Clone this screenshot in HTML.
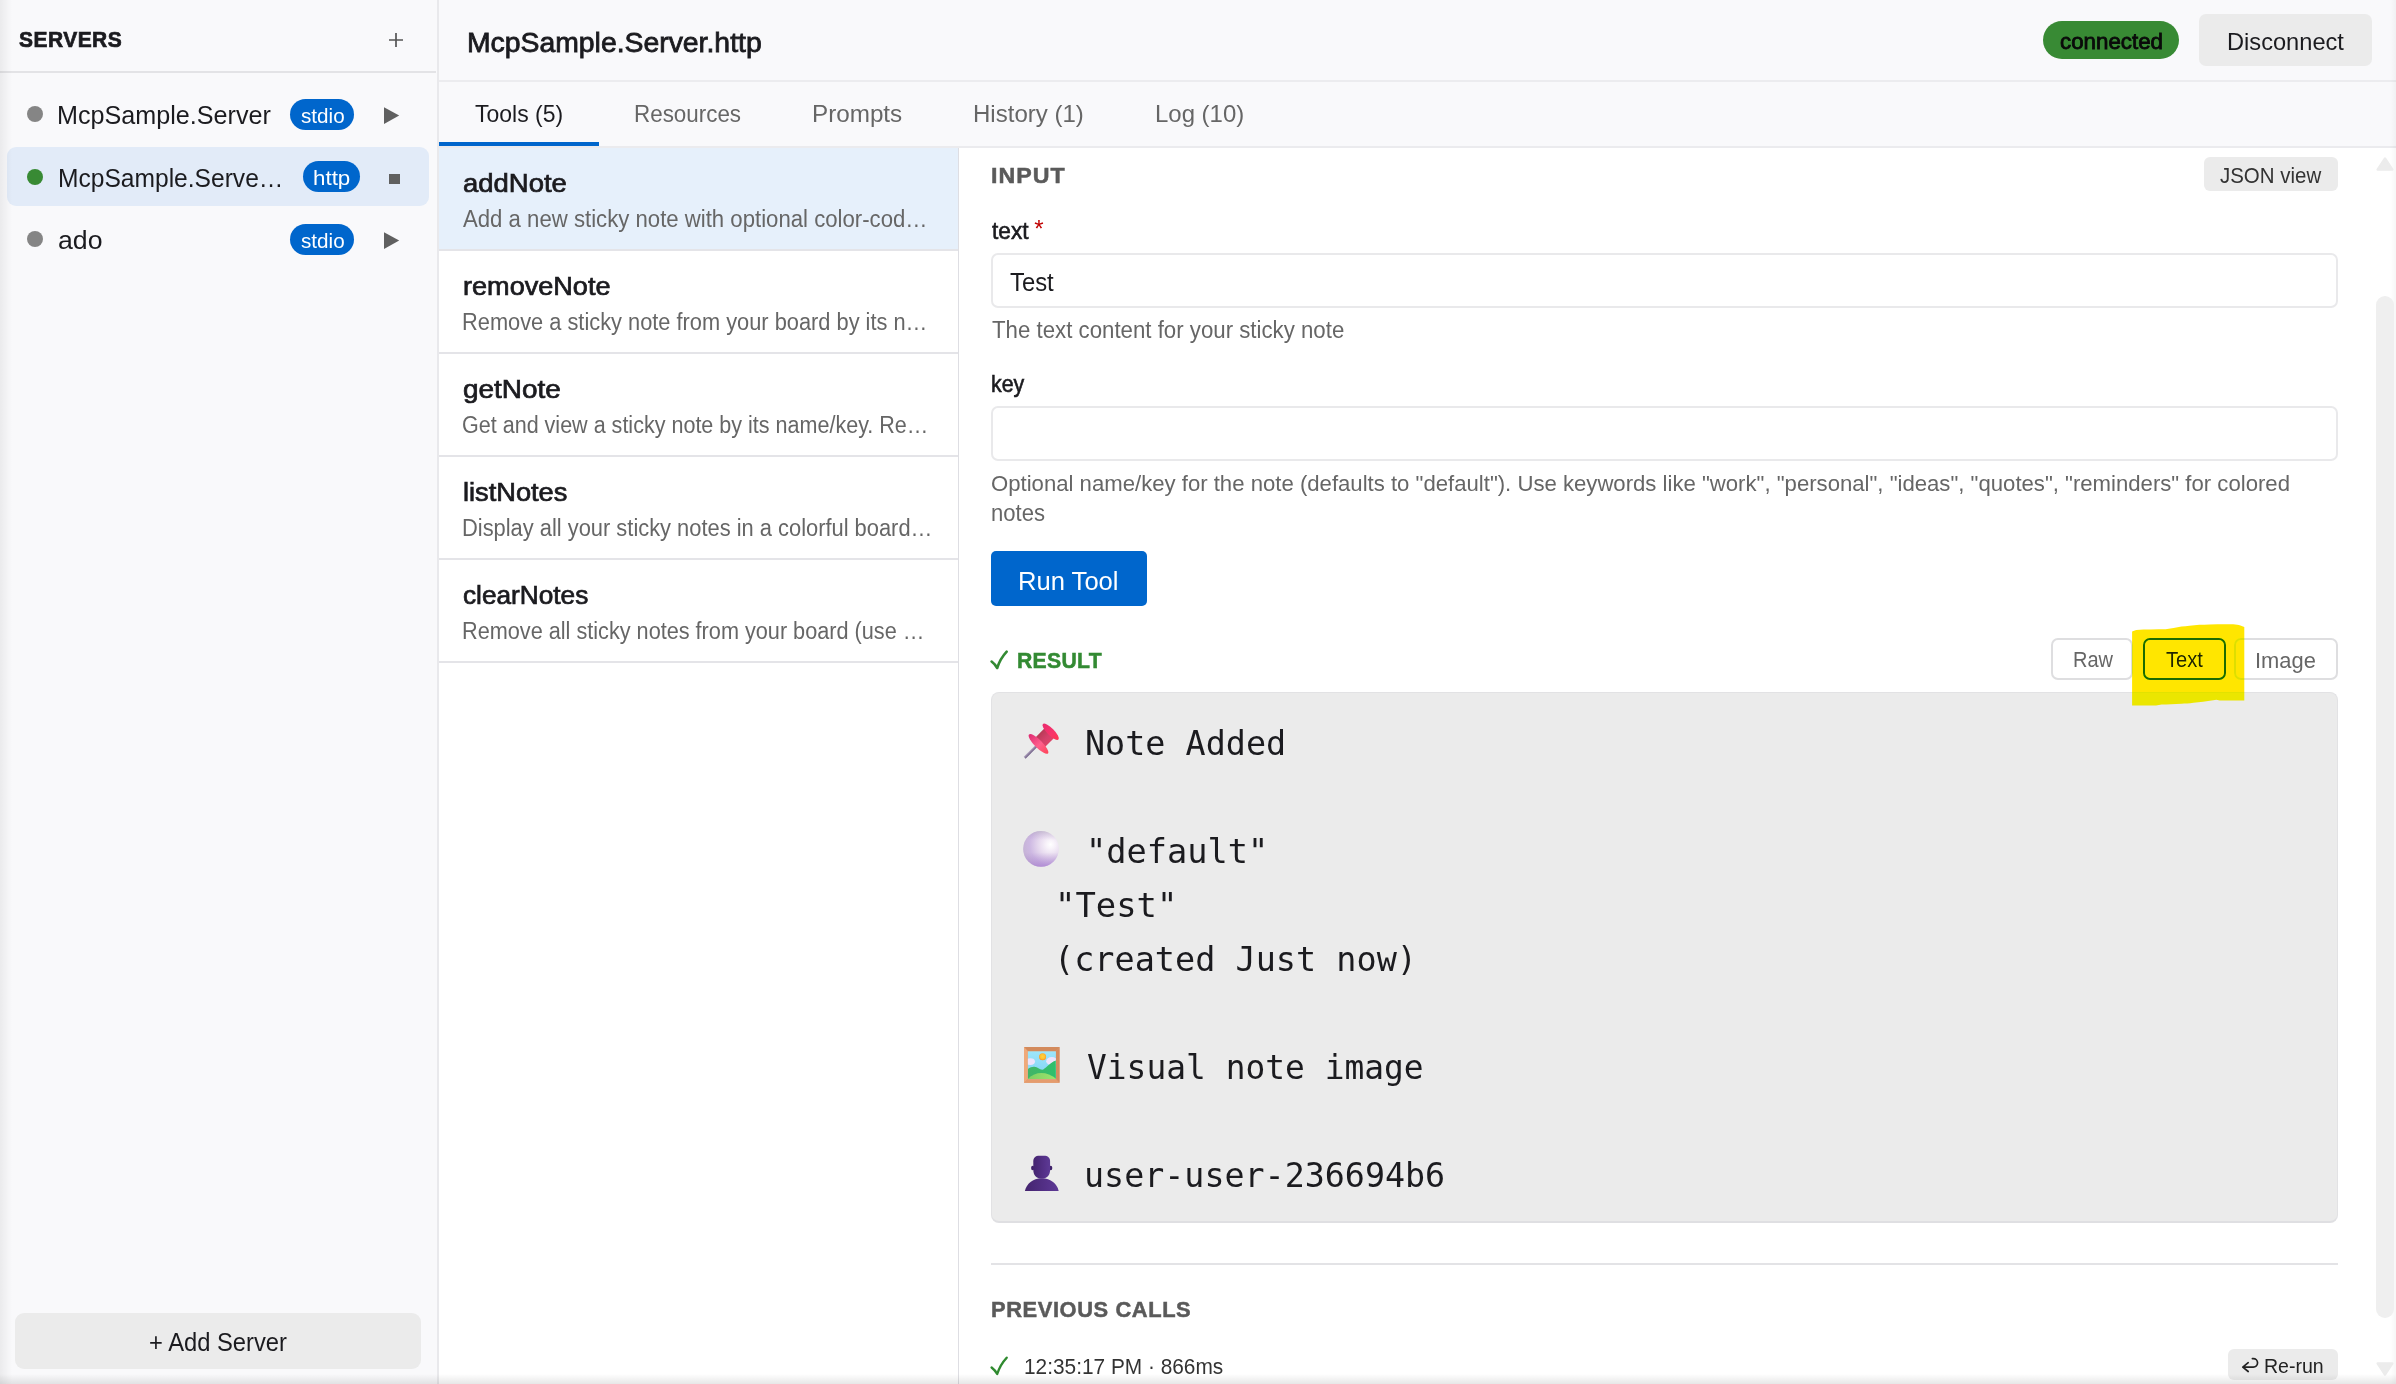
<!DOCTYPE html>
<html lang="en">
<head>
<meta charset="utf-8">
<title>MCP Inspector - McpSample.Server.http</title>
<style>
  html, body { margin: 0; padding: 0; }
  body { width: 2396px; height: 1384px; overflow: hidden; background: #fff;
         font-family: "Liberation Sans", sans-serif; color: #1b1b1f; }
  #app { position: relative; width: 2396px; height: 1384px; overflow: hidden; background: #fff; }
  .abs { position: absolute; box-sizing: border-box; }
  .t { position: absolute; white-space: pre; line-height: 1; transform-origin: 0 0; }
  /* regions */
  #sidebar { left: 0; top: 0; width: 439px; height: 1384px; background: #f9f9fb; border-right: 2px solid #e9e9ec; }
  #side-head { left: 0; top: 0; width: 436px; height: 73px; border-bottom: 2px solid #e3e3e6; }
  #header { left: 439px; top: 0; width: 1957px; height: 82px; background: #f9f9fb; border-bottom: 2px solid #ececef; }
  #tabs { left: 439px; top: 82px; width: 1957px; height: 66px; background: #f9f9fb; border-bottom: 2px solid #ebebee; }
  #tab-active { left: 439px; top: 142px; width: 160px; height: 4px; background: #0066cc; }
  #toollist { left: 439px; top: 148px; width: 520.5px; height: 1236px; background: #fff; border-right: 2px solid #dedee3; }
  .tool { left: 439px; width: 518.5px; height: 103px; border-bottom: 2px solid #e4e4e8; }
  .tool.sel { background: #e6f0fb; }
  #detail { left: 959px; top: 148px; width: 1437px; height: 1236px; background: #fff; }
  .srv-sel { left: 7px; top: 147px; width: 422px; height: 59px; border-radius: 9px; background: #e2ebf8; }
  .dot { width: 16px; height: 16px; border-radius: 50%; background: #858585; }
  .dot.on { background: #388a34; }
  .badge { background: #0066cc; border-radius: 16px; height: 31px; }
  .btn { background: #ebebeb; border-radius: 7px; }
  .input { left: 991px; width: 1347px; height: 55px; border: 2px solid #e9e9eb; border-radius: 7px; background: #fff; }
  .seg { top: 638px; height: 42px; border: 2px solid #dedee0; border-radius: 7px; background: #fff; }
  #result { left: 991px; top: 692px; width: 1347px; height: 531px; background: #ebebeb; border-radius: 8px;
            border: 1px solid #e2e2e4; border-bottom: 2px solid #dfdfe2; }
</style>
</head>
<body>
<div id="app">

  <!-- ============ SIDEBAR ============ -->
  <div id="sidebar" class="abs"></div>
  <div id="side-head" class="abs"></div>
  <svg class="abs" style="left:386px;top:30px" width="20" height="20" viewBox="0 0 20 20"><path d="M3 10H17M10 3V17" stroke="#555" stroke-width="1.7" fill="none"/></svg>

  <div class="abs srv-sel"></div>
  <div class="abs dot" style="left:27px;top:106px"></div>
  <div class="abs dot on" style="left:27px;top:169px"></div>
  <div class="abs dot" style="left:27px;top:231px"></div>

  <div class="abs badge" style="left:290px;top:99px;width:64px"></div>
  <div class="abs badge" style="left:303px;top:161px;width:57px"></div>
  <div class="abs badge" style="left:290px;top:224px;width:64px"></div>

  <svg class="abs" style="left:383px;top:106px" width="18" height="20" viewBox="0 0 18 20"><path d="M1 1.2L16.2 9.6L1 18z" fill="#606060"/></svg>
  <div class="abs" style="left:389px;top:174px;width:11px;height:10px;background:#606060"></div>
  <svg class="abs" style="left:383px;top:231px" width="18" height="20" viewBox="0 0 18 20"><path d="M1 1.2L16.2 9.6L1 18z" fill="#606060"/></svg>

  <div class="abs btn" style="left:15px;top:1313px;width:406px;height:56px;border-radius:9px"></div>

  <!-- ============ HEADER ============ -->
  <div id="header" class="abs"></div>
  <div class="abs" style="left:2043px;top:21px;width:136px;height:38px;border-radius:19px;background:#388a34"></div>
  <div class="abs btn" style="left:2199px;top:14px;width:173px;height:52px"></div>

  <!-- ============ TABS ============ -->
  <div id="tabs" class="abs"></div>
  <div id="tab-active" class="abs"></div>

  <!-- ============ TOOL LIST ============ -->
  <div id="toollist" class="abs"></div>
  <div class="abs tool sel" style="top:148px"></div>
  <div class="abs tool" style="top:251px"></div>
  <div class="abs tool" style="top:354px"></div>
  <div class="abs tool" style="top:457px"></div>
  <div class="abs tool" style="top:560px"></div>

  <!-- ============ DETAIL ============ -->
  <div id="detail" class="abs"></div>
  <div class="abs btn" style="left:2204px;top:157px;width:134px;height:34px;border-radius:6px"></div>
  <div class="abs input" style="top:253px"></div>
  <div class="abs input" style="top:406px"></div>
  <div class="abs" style="left:991px;top:551px;width:156px;height:55px;border-radius:5px;background:#0066cc"></div>

  <!-- result header -->
  <svg class="abs" style="left:988px;top:648px" width="24" height="24" viewBox="0 0 24 24"><path d="M3.600 13.500C5.600 15 7.600 17.200 9.200 20C11.200 13.800 14.300 8.400 18.700 3.700" stroke="#338a33" stroke-width="2.600" fill="none" stroke-linecap="round" stroke-linejoin="round"/></svg>
  <div class="abs seg" style="left:2051px;width:82px"></div>
  <div class="abs seg" style="left:2234px;width:104px"></div>
  <div class="abs seg" style="left:2143px;width:83px;border:2px solid #1b6b1b"></div>

  <!-- result box -->
  <div id="result" class="abs"></div>

  <!-- emoji icons drawn as SVG -->
  <!-- pushpin -->
  <svg class="abs" style="left:1011px;top:711px" width="60" height="60" viewBox="0 0 60 60">
    <defs>
      <linearGradient id="pinBase" x1="0" y1="0" x2="1" y2="0"><stop offset="0" stop-color="#df2a72"/><stop offset="0.55" stop-color="#ff5f8c"/><stop offset="1" stop-color="#ff4458"/></linearGradient>
      <linearGradient id="pinHead" x1="0" y1="0" x2="1" y2="0"><stop offset="0" stop-color="#ea2a6e"/><stop offset="0.6" stop-color="#f7356a"/><stop offset="1" stop-color="#ff3550"/></linearGradient>
      <linearGradient id="pinNeck" x1="0" y1="0" x2="1" y2="0"><stop offset="0" stop-color="#b83a56"/><stop offset="0.6" stop-color="#d4406a"/><stop offset="1" stop-color="#dc4468"/></linearGradient>
      <linearGradient id="ndl" x1="0" y1="0" x2="1" y2="0"><stop offset="0" stop-color="#b3a6c0"/><stop offset="1" stop-color="#6c5c84"/></linearGradient>
    </defs>
    <g transform="translate(27.5 32.9) rotate(45)">
      <rect x="-1.300" y="2" width="2.600" height="17.600" fill="url(#ndl)"/>
      <rect x="-6.75" y="-17" width="13.5" height="17" fill="url(#pinNeck)"/>
      <ellipse cx="0" cy="0" rx="13.400" ry="3.900" fill="url(#pinBase)"/>
      <ellipse cx="0" cy="-17.200" rx="11" ry="3.500" fill="url(#pinHead)"/>
    </g>
  </svg>
  <!-- white/lilac sphere -->
  <svg class="abs" style="left:1011px;top:819px" width="60" height="60" viewBox="0 0 60 60">
    <defs>
      <radialGradient id="sph" gradientUnits="userSpaceOnUse" cx="39.5" cy="25.5" r="30"><stop offset="0" stop-color="#ffffff"/><stop offset="0.14" stop-color="#f8f3fa"/><stop offset="0.4" stop-color="#e6d9ee"/><stop offset="0.7" stop-color="#cdb8e2"/><stop offset="1" stop-color="#c3b2d2"/></radialGradient>
      <linearGradient id="sphB" x1="0" y1="0" x2="0" y2="1"><stop offset="0" stop-color="#a0a0a8" stop-opacity="0.35"/><stop offset="0.25" stop-color="#b090d0" stop-opacity="0"/><stop offset="0.6" stop-color="#b090d0" stop-opacity="0"/><stop offset="1" stop-color="#a67bd0" stop-opacity="0.7"/></linearGradient>
    </defs>
    <circle cx="30" cy="29.9" r="17.9" fill="url(#sph)"/>
    <circle cx="30" cy="29.9" r="17.9" fill="url(#sphB)"/>
  </svg>
  <!-- framed picture -->
  <svg class="abs" style="left:1024px;top:1047px" width="36" height="36" viewBox="0 0 36 36">
    <defs>
      <linearGradient id="sky" x1="0" y1="0" x2="0" y2="1"><stop offset="0" stop-color="#9de6fb"/><stop offset="1" stop-color="#7fd0f3"/></linearGradient>
      <radialGradient id="sun" cx="0.5" cy="0.45" r="0.55"><stop offset="0" stop-color="#ffd23f"/><stop offset="0.65" stop-color="#ffc02e"/><stop offset="1" stop-color="#ff8a1e"/></radialGradient>
      <linearGradient id="mtn" x1="0" y1="0" x2="1" y2="0"><stop offset="0" stop-color="#43b466"/><stop offset="1" stop-color="#2fc06c"/></linearGradient>
      <linearGradient id="fld" x1="0" y1="0" x2="1" y2="0"><stop offset="0" stop-color="#7fcf63"/><stop offset="1" stop-color="#9be36d"/></linearGradient>
      <clipPath id="pic"><rect x="3.9" y="4.300" width="28" height="27.800"/></clipPath>
    </defs>
    <rect x="0" y="0" width="35.5" height="35.800" fill="#e29a6b"/>
    <path d="M0 0H35.5L31.900 4.300H3.900z" fill="#d38a5c"/>
    <path d="M35.5 0V35.800L31.900 32.100V4.300z" fill="#d48c60"/>
    <path d="M0 0V35.800L3.900 32.100V4.300z" fill="#efa979"/>
    <path d="M0 35.800H35.5L31.900 32.100H3.900z" fill="#e59c6e"/>
    <rect x="3.9" y="4.300" width="28" height="27.800" fill="url(#sky)"/>
    <g clip-path="url(#pic)">
      <ellipse cx="6.300" cy="14.600" rx="4.700" ry="3.400" fill="#eee3fb"/>
      <ellipse cx="27.800" cy="14.200" rx="5.600" ry="4.100" fill="#eee3fb"/>
      <circle cx="18.600" cy="9.800" r="3.500" fill="url(#sun)"/>
      <path d="M3.900 22.100C6 20.300 8.500 19.600 10.400 19.800C13.500 20 15.500 22.600 18.200 22.800C21 22.500 25 16 31.900 13.500V32.100H3.900z" fill="url(#mtn)"/>
      <path d="M3.900 31.700C8 27.800 12.500 26 17.300 26C22.500 26 27.500 28 31.900 31.500V32.100H3.900z" fill="url(#fld)"/>
    </g>
  </svg>
  <!-- bust in silhouette -->
  <svg class="abs" style="left:1011px;top:1143px" width="60" height="60" viewBox="0 0 60 60">
    <defs>
      <linearGradient id="bst" x1="0" y1="0" x2="1" y2="0"><stop offset="0" stop-color="#44246f"/><stop offset="0.65" stop-color="#553189"/><stop offset="1" stop-color="#5d3a95"/></linearGradient>
    </defs>
    <ellipse cx="21.700" cy="25" rx="1.600" ry="2.200" fill="#3e2168"/>
    <ellipse cx="39.700" cy="25" rx="1.600" ry="2.200" fill="#3e2168"/>
    <path d="M22.300 18.500C22.300 14.600 24.500 12.800 28.500 12.800H32.900C36.900 12.800 39.100 14.600 39.100 18.500V27C39.100 32 36 35.600 30.700 35.600C25.400 35.600 22.300 32 22.300 27z" fill="url(#bst)"/>
    <path d="M13.900 47.900C15.600 41 21.600 35.300 30.800 35.300C40 35.300 46 41 47.700 47.900z" fill="url(#bst)"/>
  </svg>

  <!-- separator + previous calls -->
  <div class="abs" style="left:991px;top:1263px;width:1347px;height:2px;background:#e3e3e6"></div>
  <svg class="abs" style="left:988px;top:1354px" width="24" height="24" viewBox="0 0 24 24"><path d="M3.600 13.500C5.600 15 7.600 17.200 9.200 20C11.200 13.800 14.300 8.400 18.700 3.700" stroke="#2f8a2f" stroke-width="2.400" fill="none" stroke-linecap="round" stroke-linejoin="round"/></svg>
  <div class="abs btn" style="left:2228px;top:1349px;width:110px;height:31px;border-radius:6px"></div>
  <svg class="abs" style="left:2240px;top:1355px" width="20" height="20" viewBox="0 0 20 20"><path d="M12.400 3.600H13.300A4.250 4.250 0 0 1 13.300 12.100H3M8.200 7.700L2.800 12.100L8.200 16.500" stroke="#222" stroke-width="1.700" fill="none" stroke-linecap="round" stroke-linejoin="round"/></svg>

  <!-- scrollbar -->
  <div class="abs" style="left:2390px;top:0;width:6px;height:1384px;background:linear-gradient(to right, rgba(0,0,0,0), rgba(0,0,0,0.035))"></div>
  <svg class="abs" style="left:2375px;top:156px" width="20" height="16" viewBox="0 0 20 16"><path d="M10 2.400L17.400 13.600H2.600z" fill="#ececec" stroke="#ececec" stroke-width="2.400" stroke-linejoin="round"/></svg>
  <div class="abs" style="left:2376px;top:296px;width:18px;height:1022px;border-radius:9px;background:#efefef"></div>
  <svg class="abs" style="left:2375px;top:1361px" width="20" height="16" viewBox="0 0 20 16"><path d="M10 13.600L17.400 2.400H2.600z" fill="#ececec" stroke="#ececec" stroke-width="2.400" stroke-linejoin="round"/></svg>

  <!-- ============ TEXT ============ -->
<span class="t" style='left:19.35px;top:28.68px;font-size:22px;font-weight:700;color:#1b1b1f;font-family:"Liberation Sans", sans-serif;letter-spacing:0.500px;transform:scaleX(0.9531);-webkit-text-stroke:0.7px currentColor;'>SERVERS</span>
<span class="t" style='left:57.49px;top:103.24px;font-size:25px;font-weight:400;color:#1b1b1f;font-family:"Liberation Sans", sans-serif;transform:scaleX(1.0060);'>McpSample.Server</span>
<span class="t" style='left:300.75px;top:105.12px;font-size:21px;font-weight:400;color:#fff;font-family:"Liberation Sans", sans-serif;transform:scaleX(0.9845);'>stdio</span>
<span class="t" style='left:57.53px;top:165.74px;font-size:25px;font-weight:400;color:#1b1b1f;font-family:"Liberation Sans", sans-serif;transform:scaleX(0.9833);'>McpSample.Serve…</span>
<span class="t" style='left:312.69px;top:167.12px;font-size:21px;font-weight:400;color:#fff;font-family:"Liberation Sans", sans-serif;transform:scaleX(1.0645);'>http</span>
<span class="t" style='left:58.43px;top:227.99px;font-size:25px;font-weight:400;color:#1b1b1f;font-family:"Liberation Sans", sans-serif;transform:scaleX(1.0676);'>ado</span>
<span class="t" style='left:300.75px;top:230.12px;font-size:21px;font-weight:400;color:#fff;font-family:"Liberation Sans", sans-serif;transform:scaleX(0.9845);'>stdio</span>
<span class="t" style='left:149.05px;top:1330.24px;font-size:25px;font-weight:400;color:#1b1b1f;font-family:"Liberation Sans", sans-serif;transform:scaleX(0.9499);'>+ Add Server</span>
<span class="t" style='left:466.74px;top:29.12px;font-size:27.5px;font-weight:400;color:#1b1b1f;font-family:"Liberation Sans", sans-serif;transform:scaleX(1.0309);-webkit-text-stroke:0.8px currentColor;'>McpSample.Server.http</span>
<span class="t" style='left:2060.40px;top:31.03px;font-size:22px;font-weight:400;color:#0a0a0a;font-family:"Liberation Sans", sans-serif;transform:scaleX(1.0141);-webkit-text-stroke:0.8px currentColor;'>connected</span>
<span class="t" style='left:2226.52px;top:30.08px;font-size:24px;font-weight:400;color:#1b1b1f;font-family:"Liberation Sans", sans-serif;transform:scaleX(0.9847);'>Disconnect</span>
<span class="t" style='left:475.00px;top:101.66px;font-size:24.5px;font-weight:400;color:#1b1b1f;font-family:"Liberation Sans", sans-serif;transform:scaleX(0.9376);'>Tools (5)</span>
<span class="t" style='left:634.17px;top:101.66px;font-size:24.5px;font-weight:400;color:#666;font-family:"Liberation Sans", sans-serif;transform:scaleX(0.9142);'>Resources</span>
<span class="t" style='left:812.02px;top:101.66px;font-size:24.5px;font-weight:400;color:#666;font-family:"Liberation Sans", sans-serif;transform:scaleX(0.9891);'>Prompts</span>
<span class="t" style='left:973.34px;top:101.66px;font-size:24.5px;font-weight:400;color:#666;font-family:"Liberation Sans", sans-serif;transform:scaleX(0.9807);'>History (1)</span>
<span class="t" style='left:1154.75px;top:101.66px;font-size:24.5px;font-weight:400;color:#666;font-family:"Liberation Sans", sans-serif;transform:scaleX(0.9774);'>Log (10)</span>
<span class="t" style='left:462.85px;top:170.64px;font-size:25px;font-weight:400;color:#1b1b1f;font-family:"Liberation Sans", sans-serif;transform:scaleX(1.0981);-webkit-text-stroke:0.7px currentColor;'>addNote</span>
<span class="t" style='left:463.40px;top:208.33px;font-size:23px;font-weight:400;color:#666;font-family:"Liberation Sans", sans-serif;transform:scaleX(0.9637);'>Add a new sticky note with optional color-cod…</span>
<span class="t" style='left:462.87px;top:273.64px;font-size:25px;font-weight:400;color:#1b1b1f;font-family:"Liberation Sans", sans-serif;transform:scaleX(1.0833);-webkit-text-stroke:0.7px currentColor;'>removeNote</span>
<span class="t" style='left:462.45px;top:311.33px;font-size:23px;font-weight:400;color:#666;font-family:"Liberation Sans", sans-serif;transform:scaleX(0.9481);'>Remove a sticky note from your board by its n…</span>
<span class="t" style='left:462.83px;top:376.64px;font-size:25px;font-weight:400;color:#1b1b1f;font-family:"Liberation Sans", sans-serif;transform:scaleX(1.1172);-webkit-text-stroke:0.7px currentColor;'>getNote</span>
<span class="t" style='left:462.46px;top:414.33px;font-size:23px;font-weight:400;color:#666;font-family:"Liberation Sans", sans-serif;transform:scaleX(0.9362);'>Get and view a sticky note by its name/key. Re…</span>
<span class="t" style='left:462.86px;top:479.64px;font-size:25px;font-weight:400;color:#1b1b1f;font-family:"Liberation Sans", sans-serif;transform:scaleX(1.0884);-webkit-text-stroke:0.7px currentColor;'>listNotes</span>
<span class="t" style='left:462.45px;top:517.33px;font-size:23px;font-weight:400;color:#666;font-family:"Liberation Sans", sans-serif;transform:scaleX(0.9509);'>Display all your sticky notes in a colorful board…</span>
<span class="t" style='left:462.90px;top:582.64px;font-size:25px;font-weight:400;color:#1b1b1f;font-family:"Liberation Sans", sans-serif;transform:scaleX(1.0484);-webkit-text-stroke:0.7px currentColor;'>clearNotes</span>
<span class="t" style='left:462.46px;top:620.33px;font-size:23px;font-weight:400;color:#666;font-family:"Liberation Sans", sans-serif;transform:scaleX(0.9420);'>Remove all sticky notes from your board (use …</span>
<span class="t" style='left:990.72px;top:165.05px;font-size:22.5px;font-weight:700;color:#5a5a5a;font-family:"Liberation Sans", sans-serif;letter-spacing:1.000px;transform:scaleX(1.0317);-webkit-text-stroke:0.5px currentColor;'>INPUT</span>
<span class="t" style='left:2220.25px;top:165.03px;font-size:22px;font-weight:400;color:#333;font-family:"Liberation Sans", sans-serif;transform:scaleX(0.9297);'>JSON view</span>
<span class="t" style='left:991.80px;top:218.68px;font-size:24px;font-weight:400;color:#1b1b1f;font-family:"Liberation Sans", sans-serif;transform:scaleX(0.9458);-webkit-text-stroke:0.6px currentColor;'>text</span>
<span class="t" style='left:1034.20px;top:216.58px;font-size:24px;font-weight:400;color:#c00000;font-family:"Liberation Sans", sans-serif;'>*</span>
<span class="t" style='left:1009.75px;top:269.74px;font-size:25px;font-weight:400;color:#1b1b1f;font-family:"Liberation Sans", sans-serif;transform:scaleX(0.9531);'>Test</span>
<span class="t" style='left:991.50px;top:319.43px;font-size:23px;font-weight:400;color:#666;font-family:"Liberation Sans", sans-serif;transform:scaleX(0.9669);'>The text content for your sticky note</span>
<span class="t" style='left:990.91px;top:371.98px;font-size:24px;font-weight:400;color:#1b1b1f;font-family:"Liberation Sans", sans-serif;transform:scaleX(0.8914);-webkit-text-stroke:0.6px currentColor;'>key</span>
<span class="t" style='left:990.52px;top:472.60px;font-size:22.5px;font-weight:400;color:#666;font-family:"Liberation Sans", sans-serif;transform:scaleX(0.9839);'>Optional name/key for the note (defaults to "default"). Use keywords like "work", "personal", "ideas", "quotes", "reminders" for colored</span>
<span class="t" style='left:990.54px;top:502.18px;font-size:23px;font-weight:400;color:#666;font-family:"Liberation Sans", sans-serif;transform:scaleX(0.9586);'>notes</span>
<span class="t" style='left:1017.78px;top:567.64px;font-size:26px;font-weight:400;color:#fff;font-family:"Liberation Sans", sans-serif;transform:scaleX(0.9841);'>Run Tool</span>
<span class="t" style='left:1017.49px;top:649.58px;font-size:22px;font-weight:700;color:#338a33;font-family:"Liberation Sans", sans-serif;letter-spacing:0.300px;transform:scaleX(0.9642);-webkit-text-stroke:0.5px currentColor;'>RESULT</span>
<span class="t" style='left:2072.87px;top:650.20px;font-size:21.5px;font-weight:400;color:#666;font-family:"Liberation Sans", sans-serif;transform:scaleX(0.9298);'>Raw</span>
<span class="t" style='left:2165.90px;top:650.20px;font-size:21.5px;font-weight:400;color:#222;font-family:"Liberation Sans", sans-serif;transform:scaleX(0.9377);'>Text</span>
<span class="t" style='left:2254.61px;top:649.78px;font-size:22px;font-weight:400;color:#666;font-family:"Liberation Sans", sans-serif;transform:scaleX(0.9948);'>Image</span>
<span class="t" style='left:1084.51px;top:726.54px;font-size:33.5px;font-weight:400;color:#1b1b1f;font-family:"DejaVu Sans Mono", "Liberation Mono", monospace;transform:scaleX(0.9974);'>Note Added</span>
<span class="t" style='left:1085.98px;top:834.54px;font-size:33.5px;font-weight:400;color:#1b1b1f;font-family:"DejaVu Sans Mono", "Liberation Mono", monospace;transform:scaleX(1.0038);'>"default"</span>
<span class="t" style='left:1054.95px;top:888.54px;font-size:33.5px;font-weight:400;color:#1b1b1f;font-family:"DejaVu Sans Mono", "Liberation Mono", monospace;transform:scaleX(1.0104);'>"Test"</span>
<span class="t" style='left:1054.00px;top:942.54px;font-size:33.5px;font-weight:400;color:#1b1b1f;font-family:"DejaVu Sans Mono", "Liberation Mono", monospace;'>(created Just now)</span>
<span class="t" style='left:1086.50px;top:1050.54px;font-size:33.5px;font-weight:400;color:#1b1b1f;font-family:"DejaVu Sans Mono", "Liberation Mono", monospace;transform:scaleX(0.9819);'>Visual note image</span>
<span class="t" style='left:1084.02px;top:1158.54px;font-size:33.5px;font-weight:400;color:#1b1b1f;font-family:"DejaVu Sans Mono", "Liberation Mono", monospace;transform:scaleX(0.9948);'>user-user-236694b6</span>
<span class="t" style='left:990.76px;top:1298.98px;font-size:22px;font-weight:700;color:#5a5a5a;font-family:"Liberation Sans", sans-serif;letter-spacing:0.600px;transform:scaleX(0.9937);-webkit-text-stroke:0.5px currentColor;'>PREVIOUS CALLS</span>
<span class="t" style='left:1023.80px;top:1355.78px;font-size:22px;font-weight:400;color:#333;font-family:"Liberation Sans", sans-serif;transform:scaleX(0.9471);'>12:35:17 PM · 866ms</span>
<span class="t" style='left:2264.45px;top:1355.55px;font-size:20.5px;font-weight:400;color:#222;font-family:"Liberation Sans", sans-serif;transform:scaleX(0.9533);'>Re-run</span>

  <!-- yellow highlighter annotation (multiply) -->
  <svg class="abs" style="left:2126px;top:618px;mix-blend-mode:darken" width="126" height="94" viewBox="0 0 126 94">
    <path d="M6.100 13.500L10.200 11.900C20 11.300 30 11.500 39.600 11.300L47.600 9.900C53 8.800 58 8.200 63.500 7.700C70 7 77 6.600 83.400 6.500C92 6.200 100 6.200 107.200 6.300C110 6.500 112.500 6.900 114.400 7.500L118.300 9.100V82.600H93.700L90.500 81.800L87.300 82.200C80 83.300 74 84.200 67.500 84.800C63 85.400 59 85.600 55.500 85.800C48 86.300 42 86.500 35.700 86.600L30.100 87.400H6.100z" fill="#ffe600"/>
  </svg>

  <!-- window edge shading -->
  <div class="abs" style="left:0;top:0;width:12px;height:1384px;background:linear-gradient(to right, rgba(0,0,0,0.06), rgba(0,0,0,0))"></div>
  <div class="abs" style="left:0;top:1374px;width:2396px;height:10px;background:linear-gradient(to bottom, rgba(0,0,0,0), rgba(0,0,0,0.095))"></div>
</div>
</body>
</html>
